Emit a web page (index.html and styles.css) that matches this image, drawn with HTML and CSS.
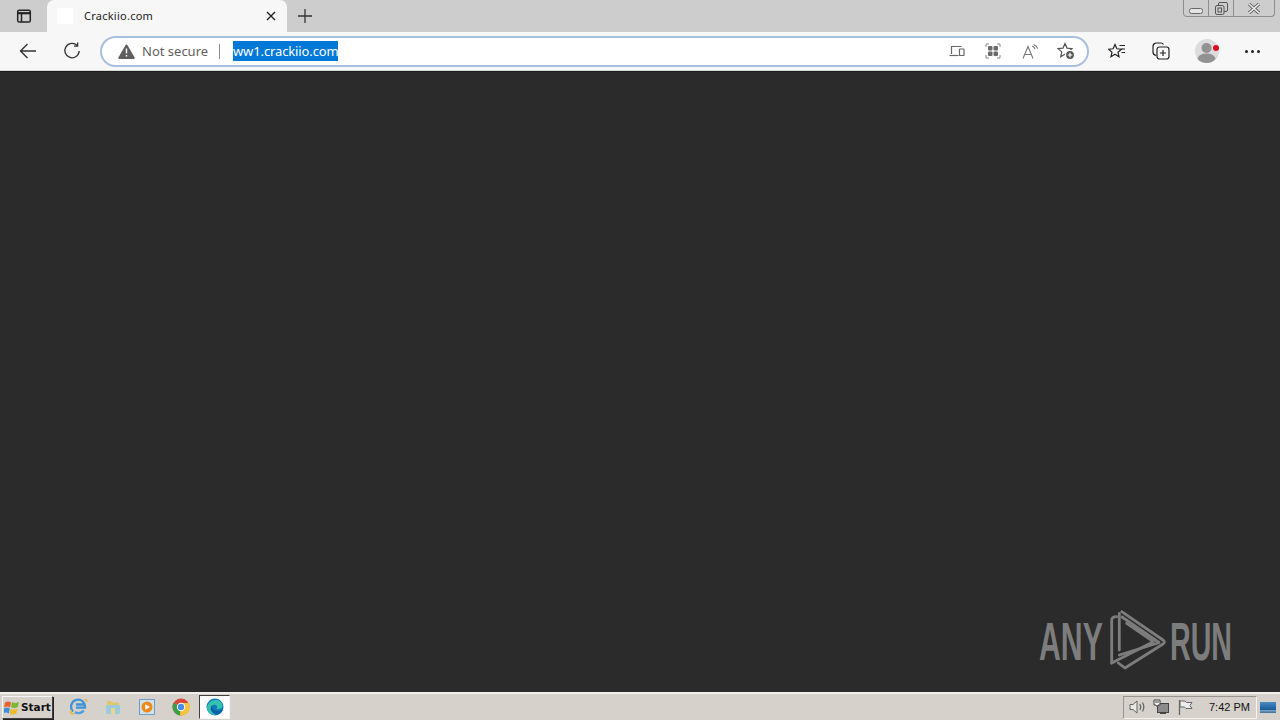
FILE: index.html
```html
<!DOCTYPE html>
<html lang="en">
<head>
<meta charset="utf-8">
<title>Crackiio.com</title>
<link rel="stylesheet" href="styles.css">
</head>
<body>
<div class="screen">
  <header class="tabstrip">
    <div class="tab-menu">
      <svg width="16" height="16" viewBox="0 0 16 16" fill="none" stroke="#222" stroke-width="1.5"><rect x="1.700" y="2.200" width="12.600" height="11.800" rx="1.600"/><path d="M1.700 5.200h12.600" stroke-width="2.200"/><path d="M5.500 5.200V14"/></svg>
    </div>
    <div class="tab">
      <span class="favicon"></span>
      <span class="tab-title">Crackiio.com</span>
      <svg class="tab-close" width="10" height="10" viewBox="0 0 10 10" stroke="#222" stroke-width="1.4"><path d="M1 1l8 8M9 1l-8 8"/></svg>
    </div>
    <div class="new-tab">
      <svg width="16" height="16" viewBox="0 0 16 16" stroke="#333" stroke-width="1.300"><path d="M8 1v14M1 8h14"/></svg>
    </div>
    <div class="caption">
      <span class="cap cap-min"><svg width="14" height="6" viewBox="0 0 14 6" fill="#e4e4e4" stroke="#666"><rect x=".5" y=".5" width="13" height="5" rx="2"/></svg></span>
      <span class="cap cap-max"><svg width="14" height="13" viewBox="0 0 14 13" fill="none" stroke="#555"><rect x="4.500" y=".5" width="9" height="9" rx="1.500"/><rect x="1.500" y="3.500" width="8.500" height="9" rx="1.500" fill="#ccc"/><rect x="4" y="6" width="3.500" height="4"/></svg></span>
      <span class="cap cap-close"><svg width="14" height="11" viewBox="0 0 14 11" stroke="#666" stroke-width="3.400"><path d="M2 1l10 9M12 1L2 10"/><path d="M2 1l10 9M12 1L2 10" stroke="#ececec" stroke-width="1.600"/></svg></span>
    </div>
  </header>

  <nav class="toolbar">
    <svg class="nav-back" width="18" height="16" viewBox="0 0 18 16" fill="none" stroke="#333" stroke-width="1.400"><path d="M17 8H1.500M8.500 1L1.500 8l7 7"/></svg>
    <svg class="nav-reload" width="18" height="18" viewBox="0 0 18 18" fill="none" stroke="#333" stroke-width="1.300"><path d="M14.200 3.600A7.200 7.200 0 1 0 16.200 9"/><path d="M14.600 .6v3.600H11"/></svg>
    <div class="omnibox">
      <svg class="warn" width="17" height="15" viewBox="0 0 17 15"><path d="M8.500 .5a1 1 0 0 1 .9.5l7.200 12.400a1 1 0 0 1-.9 1.500H1.300a1 1 0 0 1-.9-1.500L7.600 1a1 1 0 0 1 .9-.5z" fill="#5f5f5f"/><path d="M8.500 4.500v5M8.500 11v1.600" stroke="#fff" stroke-width="1.400"/></svg>
      <span class="not-secure">Not secure</span>
      <span class="divider"></span>
      <span class="url">ww1.crackiio.com</span>
      <span class="omni-icons">
        <span class="oi"><svg width="16" height="14" viewBox="0 0 16 14" fill="none" stroke="#666" stroke-width="1.200"><path d="M2.500 10V2.500h10"/><path d="M.5 11.500h9"/><rect x="10.500" y="5" width="4.500" height="6.500" rx=".6"/></svg></span>
        <span class="oi"><svg width="16" height="16" viewBox="0 0 16 16" fill="none" stroke="#888"><path d="M1 4V1h3M12 1h3v3M15 12v3h-3M4 15H1v-3"/><g fill="#6a6a6a" stroke="none"><rect x="3" y="3" width="4.500" height="4.500" rx="1"/><rect x="8.500" y="3" width="4.500" height="4.500" rx="1"/><rect x="3" y="8.500" width="4.500" height="4.500" rx="1"/><rect x="8.500" y="8.500" width="4.500" height="4.500" rx="1"/></g></svg></span>
        <span class="oi"><svg width="17" height="15" viewBox="0 0 17 15" fill="none" stroke="#777" stroke-width="1.100"><path d="M1 14.500L6 2.500l5 12M2.800 10.500h6.400"/><path d="M10 2c1.500.5 2.500 1.500 3 3M11.500 .5c2 .6 3.600 2.200 4.200 4.200"/></svg></span>
        <span class="oi"><svg width="18" height="18" viewBox="0 0 18 18" fill="none" stroke="#555" stroke-width="1.200"><path d="M8 1.500l2 4.600 5 .5-3.800 3.300 1.100 4.900L8 12.300l-4.300 2.500 1.100-4.900L1 6.600l5-.5z"/><circle cx="13" cy="13" r="4.500" fill="#555" stroke="#fff"/><path d="M13 10.800v4.400M10.800 13h4.400" stroke="#fff"/></svg></span>
      </span>
    </div>
    <div class="tools">
      <svg class="t-fav" width="18" height="17" viewBox="0 0 18 17" fill="none" stroke="#222" stroke-width="1.200"><path d="M7 1.500l1.900 4.300 4.600.4-3.500 3 1 4.500-4-2.400-4 2.400 1-4.500L.5 6.200l4.600-.4z"/><path d="M11.500 2.500h5.500M13.500 6h3.500M13.500 9.500h3.500"/></svg>
      <svg class="t-coll" width="18" height="18" viewBox="0 0 18 18" fill="none" stroke="#222" stroke-width="1.200"><path d="M4 13.500C2 13 1 11.500 1 10V4.500C1 2.500 2.500 1 4.500 1H9c1.200 0 2 .5 2.500 1.500"/><rect x="5" y="5" width="12" height="12" rx="2.500" fill="#f7f7f7"/><path d="M11 8v6M8 11h6"/></svg>
      <span class="avatar">
        <svg width="24" height="24" viewBox="0 0 24 24"><circle cx="12" cy="12" r="12" fill="#dcdcdc"/><circle cx="11.500" cy="9" r="5" fill="#929292"/><path d="M2.500 20c1-4 4.500-5.500 9-5.500s8 1.500 9 5.500c-2 2.500-5.500 4-9 4s-7-1.500-9-4z" fill="#929292"/></svg>
        <span class="red-dot"></span>
      </span>
      <span class="more"><i></i><i></i><i></i></span>
    </div>
  </nav>

  <main class="content">
    <div class="watermark">
      <span class="wm-text wm-left"><span class="wm-word wm-any">ANY</span></span>
      <svg class="wm-logo" width="56" height="62" viewBox="0 0 56 62" fill="none" stroke="#7d7d7d" stroke-width="2.800" stroke-linejoin="round" stroke-linecap="round"><path d="M1.700 53V10c0-2 2-3.500 5-3.300"/><path d="M9.300 3.500V40"/><path d="M11.700 1.700L53 30c1.800 1.300 1.800 3 0 4L15 58l-6.700-5"/><path d="M16.700 13.300L43.300 31.700 1.700 53"/><path d="M12 7l37 25.500"/><path d="M9.300 45L48 33"/></svg>
      <span class="wm-text wm-right"><span class="wm-word wm-run">RUN</span></span>
    </div>
  </main>

  <footer class="taskbar">
    <button class="start">
      <svg width="16" height="16" viewBox="0 0 16 16"><path d="M1 3.500c2-1.200 4-1.200 6 0l-1 5c-2-1.200-4-1.200-6 0z" fill="#e8622c"/><path d="M8 3c2 1.200 4 1.200 7 0l-1.200 5c-2.600 1.200-4.800 1.200-6.800 0z" fill="#7db62f"/><path d="M0 9.500c2-1.200 4-1.200 5.800 0l-1 5c-2-1.200-4-1.200-5.800 0z" fill="#3d8fd8"/><path d="M6.800 9.500c2 1.200 4 1.200 6.800 0l-1.200 5c-2.600 1.200-4.800 1.200-6.600 0z" fill="#f0b92a"/></svg>
      <span>Start</span>
    </button>
    <div class="quick">
      <span class="qi"><svg width="18" height="18" viewBox="0 0 18 18" fill="none"><path d="M14.500 2C16.500 1 17.500 2 16.500 4" stroke="#e5b02f" stroke-width="1.300"/><path d="M3 13.500a7 7 0 1 1 12-3.800H6M6 6.500h8" stroke="#3f93d6" stroke-width="2.300"/><path d="M13.800 12.500a6.500 6.500 0 0 1-8.800 1.500" stroke="#4aa3e0" stroke-width="2.300"/><path d="M1.500 12c-1.500 3.500 0 5 3.500 3" stroke="#e5b02f" stroke-width="1.300"/></svg></span>
      <span class="qi"><svg width="16" height="16" viewBox="0 0 16 16"><path d="M2 2h4l1 1.500h7V7H2z" fill="#e2c668"/><rect x="1" y="6" width="14" height="9" rx="1" fill="#9ccbdd"/><rect x="6" y="9" width="4" height="6" fill="#e7d58d"/></svg></span>
      <span class="qi"><svg width="16" height="16" viewBox="0 0 16 16"><rect x=".5" y=".5" width="15" height="15" fill="#cfe0ee" stroke="#6f9fc8"/><circle cx="8" cy="8" r="5.500" fill="#f08a1d"/><path d="M6.300 5.200L11 8l-4.700 2.800z" fill="#fff"/></svg></span>
      <span class="qi"><svg width="18" height="18" viewBox="0 0 18 18"><circle cx="9" cy="9" r="8.500" fill="#d9483b"/><path d="M9 9L1.600 4.800A8.500 8.500 0 0 0 8 17.400z" fill="#3c9f4a"/><path d="M9 5h7.800a8.500 8.500 0 0 1-8.800 12.400z" fill="#f5c43c"/><circle cx="9" cy="9" r="4.200" fill="#fff"/><circle cx="9" cy="9" r="3.200" fill="#4a8de8"/></svg></span>
      <span class="qi qi-active"><svg width="18" height="18" viewBox="0 0 18 18"><circle cx="9" cy="9" r="8.500" fill="#0f7cb8"/><path d="M1 10C1.500 5 5 2 9.500 2c3.500 0 6.500 2 7 5.500.3 2.500-2 3.500-4.500 3.500-.8 0-1.500-.1-1.700-.5 1-.5 1.300-2 .4-3C9 6 6 6.500 5 9c-.8 2.200.5 6 5 7.500C6 18 1.500 15 1 10z" fill="#35c1b0"/><path d="M5 9c-.8 2.200.5 6 5 7.500 3 0 6-2 7-5-2 1.500-6 2-8.500.5C6.500 11 6 9 6.500 7.500 5.800 8 5.300 8.300 5 9z" fill="#0b5fa6"/></svg></span>
    </div>
    <div class="tray">
      <svg width="17" height="16" viewBox="0 0 17 16" fill="none" stroke="#666"><path d="M1 5.500h3L8 2v12L4 10.500H1z" fill="#e8e8e8"/><path d="M11 5c1 2 1 4 0 6M13.500 3.500c1.700 3 1.700 6 0 9" stroke-width="1.300"/></svg>
      <svg width="17" height="16" viewBox="0 0 17 16" fill="none" stroke="#444"><rect x="4.500" y="4.500" width="11" height="9" fill="#8b8b8b"/><path d="M1 1h6v5H5v1H3V6H1z" fill="#f2f2f2"/><path d="M3 2v2M5 2v2M7 14.500h6"/></svg>
      <svg width="17" height="16" viewBox="0 0 17 16" fill="none" stroke="#666"><path d="M2.500 1v15" stroke-width="1.300"/><path d="M3 2h5l1.500 1.500H15l-2 3 2 3H9L7.500 8H3z" fill="#ececec"/></svg>
      <span class="clock">7:42 PM</span>
    </div>
    <span class="show-desktop"></span>
  </footer>
</div>
</body>
</html>
```
FILE: styles.css
```css
* { box-sizing: border-box; }
html, body { margin: 0; padding: 0; }
body { width: 1280px; height: 720px; overflow: hidden; font-family: "Noto Sans", "Liberation Sans", sans-serif; }
.screen { width: 1280px; height: 720px; display: flex; flex-direction: column; background: #2b2b2b; }

.tabstrip { height: 32px; background: #cdcdcd; display: flex; align-items: flex-end; position: relative; flex: none; }
.tab-menu { width: 47px; height: 32px; display: flex; align-items: center; padding-left: 16px; }
.tab { width: 240px; height: 32px; background: #f7f7f7; border-radius: 7px 7px 0 0; display: flex; align-items: center; padding: 0 10px; }
.favicon { width: 16px; height: 16px; background: #fff; margin-right: 11px; }
.tab-title { font-size: 11px; color: #222; flex: 1; letter-spacing: .25px; padding-bottom: 2px; }
.tab-close { margin-right: 1px; }
.new-tab { width: 36px; height: 32px; display: flex; align-items: center; justify-content: center; }
.caption { position: absolute; top: 0; right: 5px; width: 92px; height: 17px; display: flex; background: #cdcdcd; border: 1px solid #8e8e8e; border-top: 0; border-radius: 0 0 4px 4px; }
.cap { height: 100%; display: flex; align-items: center; justify-content: center; }
.cap-min { width: 25px; border-right: 1px solid #8e8e8e; padding-top: 5px; }
.cap-max { width: 25px; border-right: 1px solid #8e8e8e; }
.cap-close { flex: 1; }

.toolbar { height: 39px; background: #f7f7f7; border-bottom: 1px solid #d9d9d9; display: flex; align-items: center; padding: 0 0 0 19px; flex: none; }
.nav-back { margin-right: 26px; }
.nav-reload { margin-right: 19px; }
.omnibox { width: 989px; height: 31px; background: #fff; border: 2px solid #a9bfde; border-radius: 16px; display: flex; align-items: center; padding: 0 12px 0 16px; }
.warn { margin-right: 7px; }
.not-secure { font-size: 13px; color: #5f5f5f; width: 66px; white-space: nowrap; }
.divider { width: 1px; height: 15px; background: #8c8c8c; margin: 0 13px 0 11px; }
.url { height: 20px; line-height: 20px; background: #0078d7; color: #fff; font-size: 13px; letter-spacing: -.12px; width: 105px; white-space: nowrap; }
.omni-icons { margin-left: auto; display: flex; align-items: center; gap: 18px; }
.oi { width: 18px; height: 18px; display: flex; align-items: center; justify-content: center; }
.oi:nth-child(1), .oi:nth-child(2) { transform: translateX(-1px); }
.tools { display: flex; align-items: center; padding-left: 19px; flex: 1; }
.t-fav { margin-right: 26px; }
.t-coll { margin-right: 25px; }
.avatar { position: relative; width: 24px; height: 24px; margin-right: 26px; }
.avatar svg { display: block; }
.red-dot { position: absolute; top: 6px; right: 0; width: 6px; height: 6px; border-radius: 50%; background: #d8101c; }
.more { display: flex; gap: 3px; }
.more i { width: 3px; height: 3px; border-radius: 50%; background: #222; }

.content { flex: 1; background: #2b2b2b; border-top: 1px solid #1c1c1c; position: relative; }
.watermark { position: absolute; left: 1039px; top: 538px; width: 192px; height: 62px; display: flex; align-items: center; }
.wm-text { height: 38px; position: relative; display: block; }
.wm-left { width: 71px; }
.wm-right { width: 61px; margin-left: auto; }
.wm-word { position: absolute; left: 0; top: -11px; font-family: "Liberation Sans", sans-serif; font-size: 53px; font-weight: 700; line-height: 61px; color: #7d7d7d; transform-origin: 0 0; transform: scaleX(.57); white-space: nowrap; }
.wm-run { transform: scaleX(.54); }

.taskbar { height: 28px; background: #d6d2cb; border-top: 2px solid #f1efeb; display: flex; align-items: center; padding: 0 0 0 2px; flex: none; }
.start { width: 51px; height: 23px; background: #d6d2cb; border: 1px solid; border-color: #f5f5f5 #404040 #404040 #f5f5f5; box-shadow: 1px 1px 0 #222; padding: 0 0 0 1px; display: flex; align-items: center; gap: 1px; font-family: "DejaVu Sans", sans-serif; font-weight: 700; font-size: 10.5px; color: #111; }
.quick { display: flex; align-items: center; margin-left: 14px; gap: 10px; }
.qi { width: 24px; height: 24px; display: flex; align-items: center; justify-content: center; }
.qi-active { width: 31px; background: #fff; border: 1px solid; border-color: #404040 #f5f5f5 #f5f5f5 #404040; margin-left: -4px; }
.tray { margin-left: auto; width: 134px; height: 23px; border: 1px solid; border-color: #99958e #f5f3ef #f5f3ef #99958e; display: flex; align-items: center; padding-left: 5px; gap: 7px; margin-right: 3px; }
.clock { font-family: "Liberation Sans", sans-serif; font-size: 11px; color: #111; margin-left: 8px; white-space: nowrap; }
.show-desktop { width: 16px; height: 11px; background: linear-gradient(#4a8bc4, #1a5c9a 70%, #7fa6c6 74%, #3a6d9a); margin-right: 4px; }
```
